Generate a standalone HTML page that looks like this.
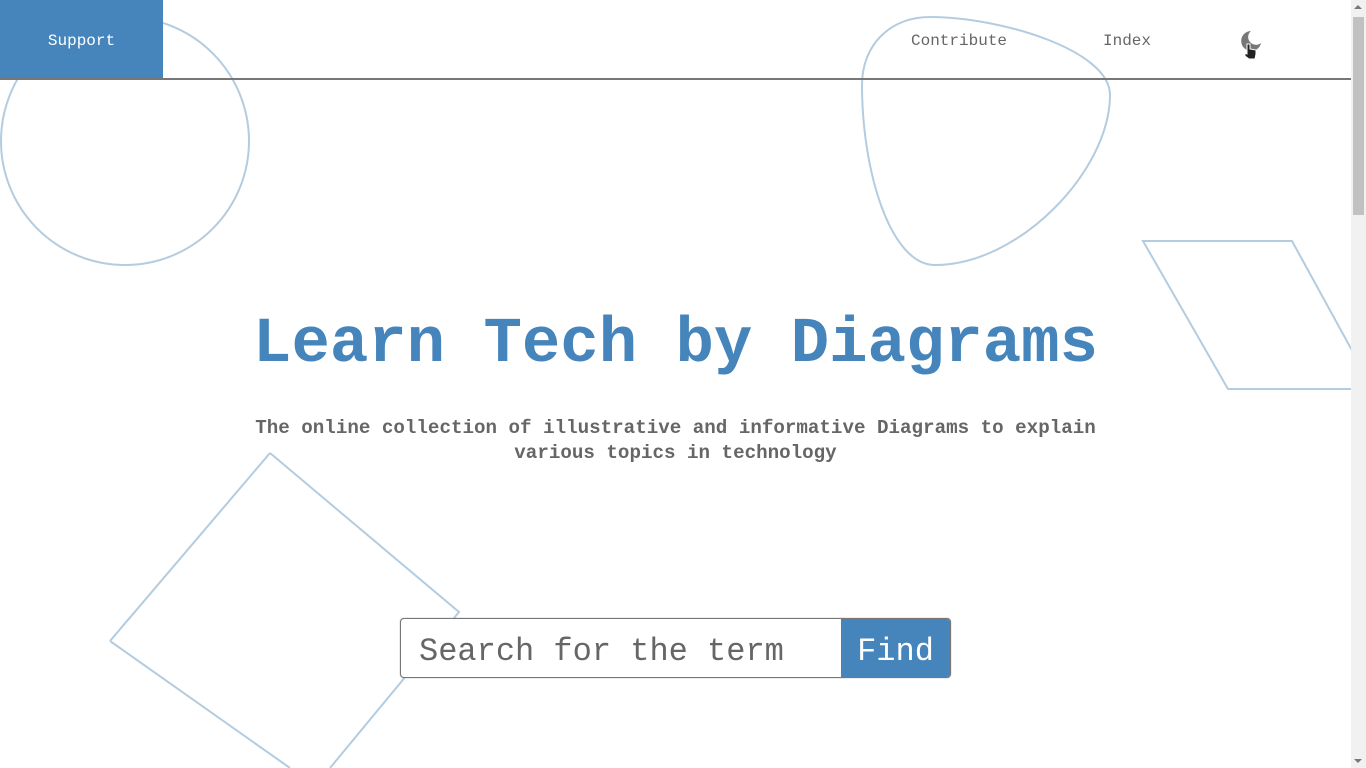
<!DOCTYPE html>
<html><head><meta charset="utf-8"><style>
html,body{margin:0;padding:0;width:1366px;height:768px;overflow:hidden;background:#fff;font-family:"Liberation Mono",monospace;}
.bg{position:absolute;left:0;top:0;}
.hdr{position:absolute;left:0;top:0;width:1351px;height:78px;border-bottom:2px solid #777;}
.sup{position:absolute;left:0;top:0;width:163px;height:78px;background:#4585bb;color:#fff;font-size:16px;line-height:82px;text-align:center;}
.nav{position:absolute;top:32px;font-size:16px;color:#666;}
.moon{position:absolute;left:1241px;top:30px;}
h1{position:absolute;left:0;width:1351px;top:307px;margin:0;text-align:center;font-size:64px;font-weight:bold;color:#4585bb;line-height:76px;}
.sub{position:absolute;left:250px;width:851px;top:416px;text-align:center;font-size:19.2px;font-weight:bold;color:#666;line-height:25px;}
.search{position:absolute;left:400px;top:618px;width:549px;height:58px;border:1px solid #777;border-radius:4px;overflow:hidden;background:#fff;box-shadow:0 0 1px #888;}
.ph{position:absolute;left:18px;top:0;line-height:66px;font-size:32px;color:#666;}
.find{position:absolute;right:0;top:0;width:109px;height:58px;background:#4585bb;color:#fff;font-size:32px;line-height:66px;text-align:center;}
.sb{position:absolute;right:0;top:0;width:15px;height:768px;background:#f1f1f1;}
.thumb{position:absolute;right:2px;top:17px;width:11px;height:198px;background:#c1c1c1;}
</style></head><body>
<svg class="bg" width="1366" height="768" fill="none" stroke="#b3cce0" stroke-width="2">
<circle cx="125" cy="141" r="124"/>
<path d="M930,17 C1000,17 1110,50 1110,95 C1110,170 1020,265 935,265 C890,265 862,170 862,85 C862,45 890,17 930,17 Z"/>
<path d="M1143,241 L1292,241 L1360,365 L1360,389 L1228,389 Z"/>
<path d="M270,453 L459,612 L330,768 M110,641 L270,453 M110,641 L290,768"/>
</svg>
<div class="hdr"></div>
<div class="sup">Support</div>
<div class="nav" style="left:911px">Contribute</div>
<div class="nav" style="left:1103px">Index</div>
<svg class="moon" width="22" height="30" viewBox="0 0 22 30">
<path d="M10,1 A10,10 0 1 0 20,13 A7,7 0 0 1 10,1 Z" fill="#777"/>
<path d="M6,14 L6,24 L4,23 L4,26 L8,29 L14,29 L15,24 L15,20 L9,19 L9,14 Z" fill="#222" stroke="#fff" stroke-width="1"/>
</svg>
<h1>Learn Tech by Diagrams</h1>
<div class="sub">The online collection of illustrative and informative Diagrams to explain various topics in technology</div>
<div class="search"><div class="ph">Search for the term</div><div class="find">Find</div></div>
<div class="sb"><div class="thumb"></div>
<div style="position:absolute;left:3px;top:5px;width:0;height:0;border-left:4px solid transparent;border-right:4px solid transparent;border-bottom:4px solid #777"></div>
<div style="position:absolute;left:3px;bottom:5px;width:0;height:0;border-left:4px solid transparent;border-right:4px solid transparent;border-top:4px solid #777"></div></div>
</body></html>
